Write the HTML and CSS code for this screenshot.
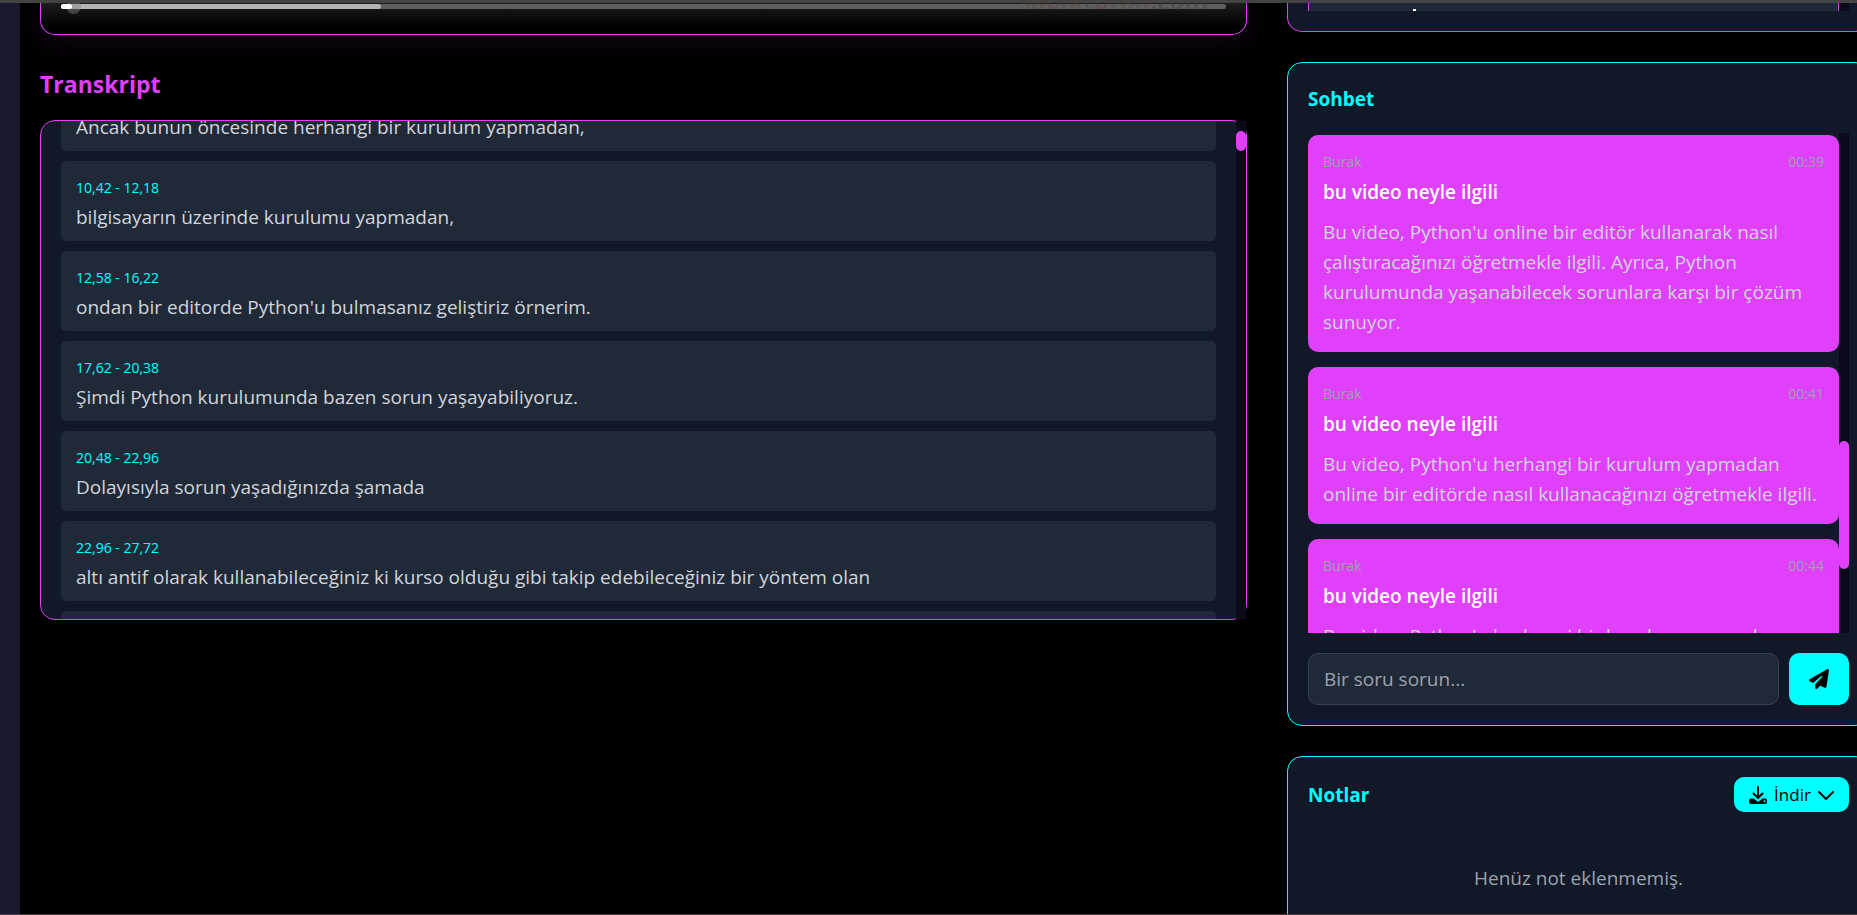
FILE: index.html
```html
<!DOCTYPE html>
<html lang="tr">
<head>
<meta charset="utf-8">
<title>Video</title>
<link rel="stylesheet" href="styles.css">
</head>
<body>
<div class="app">
  <aside class="sidebar"></aside>
  <main class="content">
    <section class="primary">
      <div class="player">
        <div class="progress"><div class="buffered"></div><div class="knob"></div><div class="played"></div></div>
        <span class="watermark"><span class="brand">sadikturan</span>.com</span>
      </div>
      <h2 class="heading">Transkript</h2>
      <div class="transcript">
        <div class="viewport">
          <ul class="lines">
            <li class="line line-cut"><p>Ancak bunun öncesinde herhangi bir kurulum yapmadan,</p></li>
            <li class="line"><span class="time">10,42 - 12,18</span><p>bilgisayarın üzerinde kurulumu yapmadan,</p></li>
            <li class="line"><span class="time">12,58 - 16,22</span><p>ondan bir editorde Python'u bulmasanız geliştiriz örnerim.</p></li>
            <li class="line"><span class="time">17,62 - 20,38</span><p>Şimdi Python kurulumunda bazen sorun yaşayabiliyoruz.</p></li>
            <li class="line"><span class="time">20,48 - 22,96</span><p>Dolayısıyla sorun yaşadığınızda şamada</p></li>
            <li class="line"><span class="time">22,96 - 27,72</span><p>altı antif olarak kullanabileceğiniz ki kurso olduğu gibi takip edebileceğiniz bir yöntem olan</p></li>
            <li class="line"></li>
          </ul>
        </div>
        <div class="rail"><div class="thumb thumb-short"></div></div>
      </div>
    </section>

    <section class="secondary">
      <div class="card questions">
        <div class="question-view"><div class="question"><div class="tail"></div></div><div class="question-rail"></div></div>
      </div>

      <div class="card chat">
        <h3 class="title">Sohbet</h3>
        <div class="chat-view">
          <div class="messages">
            <article class="message">
              <header class="meta"><span>Burak</span><time>00:39</time></header>
              <p class="ask">bu video neyle ilgili</p>
              <p class="reply">Bu video, Python'u online bir editör kullanarak nasıl çalıştıracağınızı öğretmekle ilgili. Ayrıca, Python kurulumunda yaşanabilecek sorunlara karşı bir çözüm sunuyor.</p>
            </article>
            <article class="message">
              <header class="meta"><span>Burak</span><time>00:41</time></header>
              <p class="ask">bu video neyle ilgili</p>
              <p class="reply">Bu video, Python'u herhangi bir kurulum yapmadan online bir editörde nasıl kullanacağınızı öğretmekle ilgili.</p>
            </article>
            <article class="message">
              <header class="meta"><span>Burak</span><time>00:44</time></header>
              <p class="ask">bu video neyle ilgili</p>
              <p class="reply">Bu video, Python'u herhangi bir kurulum yapmadan</p>
            </article>
          </div>
          <div class="rail"><div class="thumb thumb-long"></div></div>
        </div>
        <form class="composer">
          <input class="field" type="text" placeholder="Bir soru sorun..." aria-label="Bir soru sorun">
          <button class="send" type="button" aria-label="Gönder">
            <svg width="20" height="20" viewBox="0 0 512 512"><path d="M498.100 5.600c10.100 7 15.400 19.100 13.500 31.200l-64 416c-1.500 9.700-7.400 18.200-16 23s-18.900 5.400-28 1.600L284 427.700l-68.500 74.100c-8.900 9.700-22.900 12.900-35.200 8.100S160 493.200 160 480V396.400c0-4 1.500-7.800 4.200-10.700L331.800 202.800c5.800-6.300 5.600-16-.4-22s-15.700-6.400-22-.7L106 360.800 17.700 316.600C7.100 311.300 .3 300.700 0 288.900s5.900-22.800 16.100-28.700l448-256c10.700-6.100 23.900-5.500 34 1.400z"/></svg>
          </button>
        </form>
      </div>

      <div class="card notes">
        <header class="notes-head">
          <h3 class="title">Notlar</h3>
          <button class="download" type="button">
            <svg width="18" height="18" viewBox="0 0 18 18" fill="none" stroke="#000" stroke-width="2" stroke-linecap="round" stroke-linejoin="round"><path d="M2 12.500h2.500L9 16l4.500-3.500H16a2 2 0 0 1 2 2V16a2 2 0 0 1-2 2H2a2 2 0 0 1-2-2v-1.500a2 2 0 0 1 2-2z" fill="#000" stroke="none"/><path d="M9 1v10M4.500 7.500 9 12l4.500-4.500"/><circle cx="15.500" cy="15.200" r="1" fill="#0ff" stroke="none"/></svg>
            <span>İndir</span>
            <svg width="16" height="18" viewBox="0 0 16 18" fill="none" stroke="#000" stroke-width="2" stroke-linecap="round" stroke-linejoin="round"><path d="M1 6l7 7 7-7"/></svg>
          </button>
        </header>
        <p class="empty">Henüz not eklenmemiş.</p>
      </div>
    </section>
  </main>
</div>
</body>
</html>
```
FILE: styles.css
```css
* { box-sizing: border-box; }
body, h2, h3, p, ul { margin: 0; padding: 0; }
body {
  background: #000;
  color: #d1d5db;
  font: 19px/30px "Open Sans", "Noto Sans", sans-serif;
  overflow: hidden;
}
.app {
  display: flex;
  height: 100vh;
  overflow: hidden;
  border-top: 3px solid #444;
  border-bottom: 1px solid #523c42;
}
.sidebar { flex: 0 0 20px; background: #1a1a2e; }
.content {
  flex: 1;
  display: grid;
  grid-template-columns: minmax(0, 1207fr) minmax(0, 583fr);
  gap: 40px;
  margin-right: -13px;
  padding-left: 20px;
  align-items: start;
}
.player {
  position: relative;
  height: 32px;
  padding: 1px 20px 0;
  border: 1px solid #e040fb;
  border-top: 0;
  border-radius: 0 0 15px 15px;
  background: linear-gradient(#1c1c1c, #000 80%);
  box-shadow: 0 5px 30px rgba(224, 64, 251, 0.1);
}
.watermark {
  position: absolute;
  right: 38px;
  top: 0;
  height: 7px;
  overflow: hidden;
  display: flex;
  align-items: flex-end;
  color: rgba(60, 60, 60, 0.4);
  font-size: 24px;
  font-weight: 700;
  line-height: 19px;
}
.brand { color: rgba(90, 60, 50, 0.3); }
.progress { position: relative; height: 5px; border-radius: 3px; background: #5f5f5f; }
.buffered { width: 27.5%; height: 5px; border-radius: 3px; background: #b4b4b4; }
.knob { position: absolute; left: 5px; top: -5px; width: 15px; height: 15px; border-radius: 50%; background: rgba(128, 128, 128, 0.45); }
.played { position: absolute; left: 0; top: 0; width: 11px; height: 5px; border-radius: 3px; background: #fff; }
.heading { margin: 29px 0 16px; color: #e040fb; font-size: 23px; line-height: 40px; }
.transcript {
  position: relative;
  border: 1px solid #e040fb;
  border-radius: 15px;
  background: #111827;
}
.viewport { height: 498px; padding: 0 30px 0 20px; overflow: hidden; border-radius: 14px; }
.lines { display: flex; flex-direction: column; gap: 10px; margin-top: -50px; list-style: none; }
.line { height: 80px; flex: none; padding: 11px 15px 0; border-radius: 5px; background: #1f2937; }
.line-cut { padding-top: 41px; }
.time { display: block; padding-top: 2px; color: #0ff; font-size: 14px; line-height: 28px; }
.rail { position: absolute; top: 0; right: 0; bottom: 0; width: 10px; background: #0a0a1a; }
.thumb { border-radius: 5px; background: #e040fb; }
.thumb-short { height: 20px; margin-top: 10px; }
.thumb-long { height: 128px; margin-top: 308px; }

.secondary { display: flex; flex-direction: column; gap: 30px; }
.card { padding: 20px; border: 1px solid #0ff; border-radius: 15px; background: #111827; }
.questions { padding-top: 0; border-color: #e040fb; border-top: 0; border-radius: 0 0 15px 15px; }
.question-view { display: flex; height: 8px; }
.question { flex: 1; display: flex; align-items: flex-end; padding-left: 104px; border: solid #e040fb; border-width: 0 1px; background: #1f2937; }
.tail { width: 3px; height: 2px; background: #fff; }
.question-rail { width: 10px; background: #0a0a1a; }
.title { color: #0ff; font-size: 19px; line-height: 32px; }
.chat .title { margin-bottom: 18px; }
.chat-view { position: relative; height: 500px; overflow: hidden; }
.messages { display: flex; flex-direction: column; gap: 15px; padding: 2px 10px 0 0; }
.message { padding: 15px; border-radius: 10px; background: #e040fb; }
.meta { display: flex; justify-content: space-between; margin-bottom: 3px; color: #9ca3af; font-size: 14px; line-height: 24px; }
.ask { margin-bottom: 10px; color: #fff; font-weight: 600; }
.composer { display: flex; gap: 10px; margin-top: 20px; }
.field {
  flex: 1;
  min-width: 0;
  height: 52px;
  padding: 0 15px;
  border: 1px solid #374151;
  border-radius: 10px;
  background: #1f2937;
  color: #d1d5db;
  font: inherit;
}
.field::placeholder { color: #9ca3af; }
.send { display: grid; place-items: center; width: 60px; border: 0; border-radius: 10px; background: #0ff; }
.notes { height: 200px; }
.notes-head { display: flex; justify-content: space-between; align-items: center; }
.download {
  display: flex;
  align-items: center;
  justify-content: space-between;
  width: 115px;
  height: 35px;
  padding: 0 15px;
  border: 0;
  border-radius: 10px;
  background: #0ff;
  color: #000;
  font: 17px/30px "Open Sans", "Noto Sans", sans-serif;
}
.empty { margin-top: 51px; color: #9ca3af; text-align: center; }
```
